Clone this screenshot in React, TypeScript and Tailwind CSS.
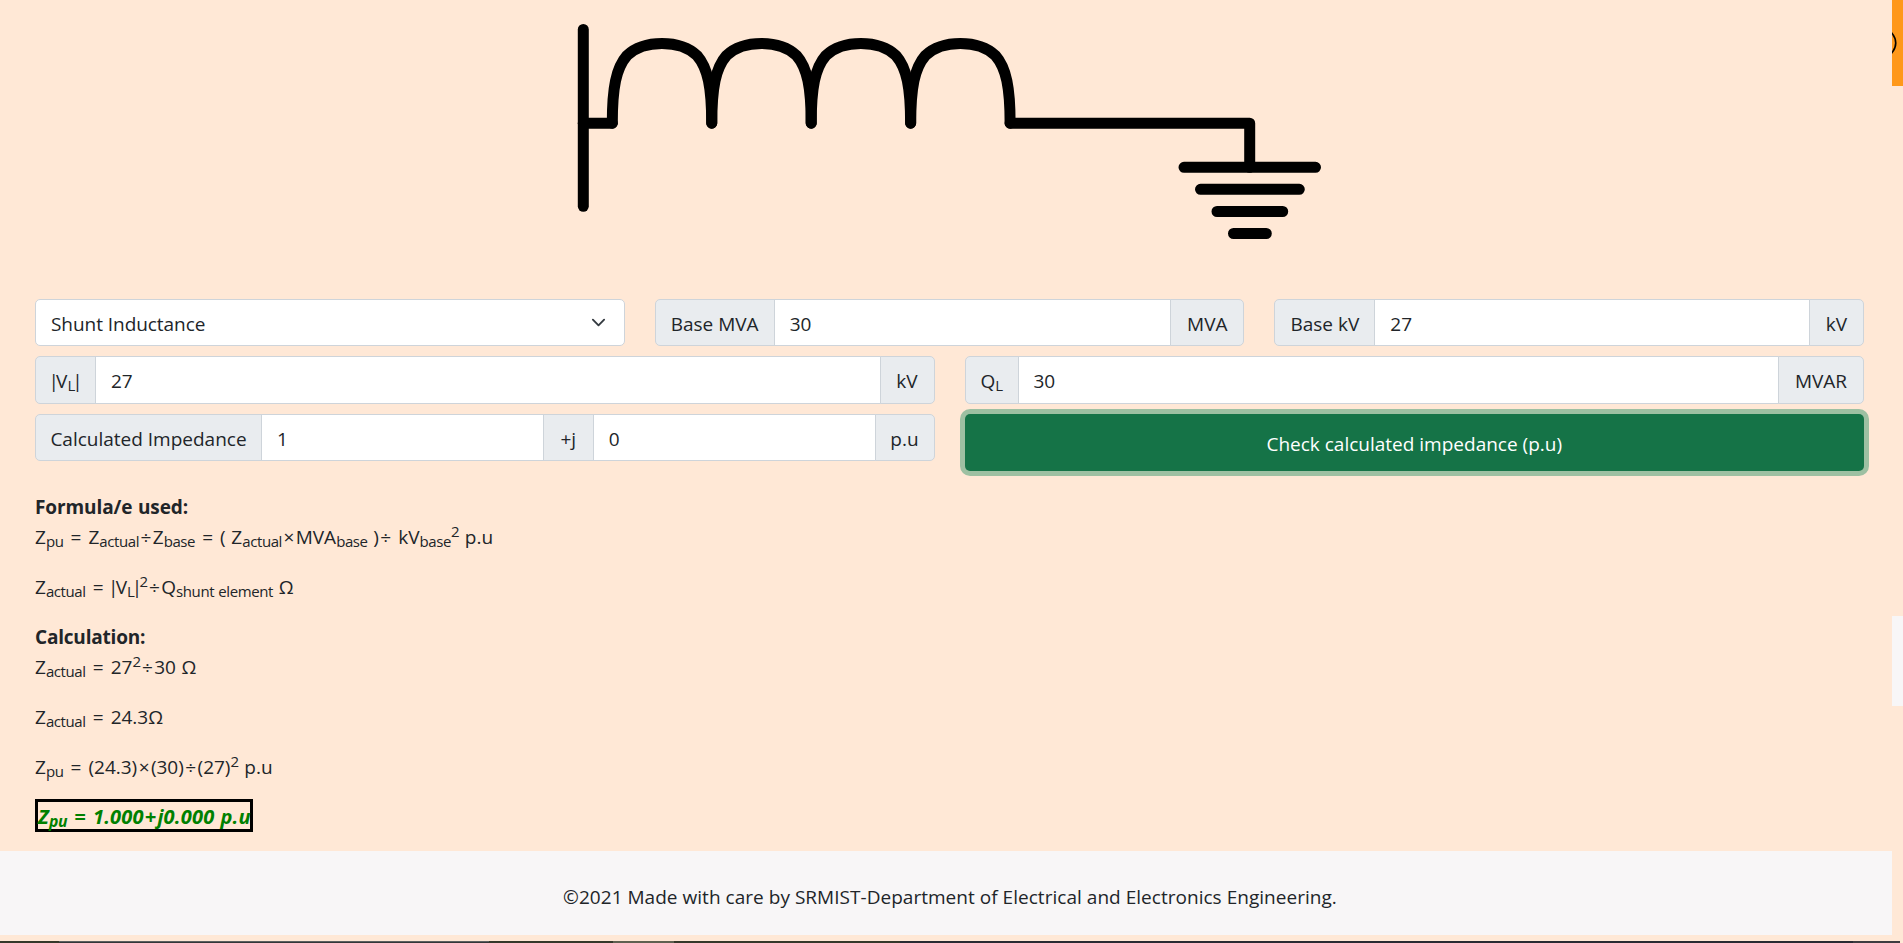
import React from "react";

const field = "flex items-center border border-[#ced4da] bg-white px-[15px] pt-[2px]";
const label = "flex items-center justify-center whitespace-nowrap border border-[#ced4da] bg-[#e9ecef] pt-[2px]";

function Sub({ children }: { children: React.ReactNode }) {
  return <sub className="bottom-[-0.18em] text-[0.79em] tracking-[-0.4px]">{children}</sub>;
}

function Sup() {
  return <sup className="text-[0.79em] tracking-[-0.4px]">2</sup>;
}

function Op({ children }: { children: React.ReactNode }) {
  return <span className="inline-block w-[13.7px] text-center">{children}</span>;
}

function Bar() {
  return <span className="inline-flex w-[5px] justify-center">|</span>;
}

function Circuit() {
  return (
    <svg className="block h-[240px] w-full" viewBox="0 0 1893 240" fill="none" stroke="#000" strokeWidth="11" strokeLinecap="round" strokeLinejoin="round">
      <path d="M583.3 29.5V206.3" />
      <path d="M583.3 123.2H612.3" />
      {[612.3, 711.8, 811.2, 910.7].map((x) => (
        <path key={x} transform={`translate(${x} 0)`} d="M0 123.2C0 88 3.7 68 14.7 55.5C23.7 47 37.7 43.5 49.7 43.5S75.7 47 84.7 55.5C95.7 68 99.4 88 99.4 123.2" />
      ))}
      <path d="M1010.1 123.2H1249.7V167.3" />
      <path d="M1184 167.3H1315.5M1200.5 189.3H1299.3M1217 211.5H1282.7M1233.5 233.5H1266.3" />
    </svg>
  );
}

export default function App() {
  return (
    <div className="relative h-[943px] w-[1903px] overflow-hidden bg-[#ffe8d6] font-['Open_Sans',sans-serif] text-[19px] leading-[30px] text-[#212529]">
      <main className="flex h-[851px] w-[1892px] flex-col">
        <div className="w-[1893px]">
          <Circuit />
        </div>
        <form className="ml-[35px] mt-[59px] flex w-[1829px] flex-col gap-[10px]">
          <div className="grid h-[47px] grid-cols-3 gap-[30px]">
            <div className="flex items-center justify-between rounded-[5px] border border-[#ced4da] bg-white pl-[15px] pr-[18px]">
              <span className="pt-[2px] tracking-[-0.05px]">Shunt Inductance</span>
              <svg className="h-[15px] w-[15px]" viewBox="0 0 16 16" fill="none" stroke="#343a40" strokeWidth="2" strokeLinecap="round" strokeLinejoin="round">
                <path d="M2 5l6 6 6-6" />
              </svg>
            </div>
            <div className="flex">
              <span className={`${label} w-[120px] rounded-l-[5px]`}>Base MVA</span>
              <span className={`${field} -mx-px flex-1`}>30</span>
              <span className={`${label} w-[74px] rounded-r-[5px]`}>MVA</span>
            </div>
            <div className="flex">
              <span className={`${label} w-[101px] rounded-l-[5px]`}>Base kV</span>
              <span className={`${field} -mx-px flex-1`}>27</span>
              <span className={`${label} w-[55px] rounded-r-[5px]`}>kV</span>
            </div>
          </div>
          <div className="grid h-[48px] grid-cols-2 gap-[30px]">
            <div className="flex">
              <span className={`${label} w-[61px] rounded-l-[5px]`}><span><Bar />V<Sub>L</Sub><Bar /></span></span>
              <span className={`${field} -mx-px flex-1`}>27</span>
              <span className={`${label} w-[55px] rounded-r-[5px]`}>kV</span>
            </div>
            <div className="flex">
              <span className={`${label} w-[54px] rounded-l-[5px]`}><span>Q<Sub>L</Sub></span></span>
              <span className={`${field} -mx-px flex-1`}>30</span>
              <span className={`${label} w-[86px] rounded-r-[5px]`}>MVAR</span>
            </div>
          </div>
          <div className="grid grid-cols-2 items-start gap-[30px]">
            <div className="flex h-[47px]">
              <span className={`${label} w-[227px] rounded-l-[5px]`}>Calculated Impedance</span>
              <span className={`${field} -mx-px flex-1`}>1</span>
              <span className={`${label} w-[51px]`}>+j</span>
              <span className={`${field} -mx-px flex-1`}>0</span>
              <span className={`${label} w-[60px] rounded-r-[5px]`}>p.u</span>
            </div>
            <button type="button" className="flex h-[57px] items-center justify-center rounded-[5px] bg-[#157347] pt-[3px] text-white shadow-[0_0_0_5px_#9dc0a2]">
              Check calculated impedance (p.u)
            </button>
          </div>
        </form>
        <section className="ml-[35px] mt-[21px] flex flex-col items-start [word-spacing:0.7px]">
          <b className="tracking-[-0.1px]">Formula/e used:</b>
          <p className="mb-5">Z<Sub>pu</Sub> <Op>=</Op> Z<Sub>actual</Sub><Op>÷</Op>Z<Sub>base</Sub> <Op>=</Op> ( Z<Sub>actual</Sub><Op>×</Op>MVA<Sub>base</Sub> )<Op>÷</Op> kV<Sub>base</Sub><Sup /> p.u</p>
          <p className="mb-5">Z<Sub>actual</Sub> <Op>=</Op> <Bar />V<Sub>L</Sub><Bar /><Sup /><Op>÷</Op>Q<Sub>shunt element</Sub> Ω</p>
          <b className="tracking-[-0.2px]">Calculation:</b>
          <p className="mb-5">Z<Sub>actual</Sub> <Op>=</Op> 27<Sup /><Op>÷</Op>30 Ω</p>
          <p className="mb-5">Z<Sub>actual</Sub> <Op>=</Op> 24.3Ω</p>
          <p className="mb-[17px]">Z<Sub>pu</Sub> <Op>=</Op> (24.3)<Op>×</Op>(30)<Op>÷</Op>(27)<Sup /> p.u</p>
          <p className="h-[33px] w-[218px] whitespace-nowrap border-[3px] border-black text-[20px] font-bold italic tracking-[0.2px] text-[#008000]">Z<Sub>pu</Sub> <Op>=</Op> 1.000<Op>+</Op>j0.000 p.u</p>
        </section>
      </main>
      <footer className="flex h-[84px] w-[1892px] items-center justify-center bg-[#f8f6f7] pl-[8px] pt-[7px] tracking-[0.03px]">
        ©2021 Made with care by SRMIST-Department of Electrical and Electronics Engineering.
      </footer>
      <div className="mt-[6px] flex h-[2px] bg-[#292a32]">
        <span className="w-[59px] bg-[#35382a]" />
        <span className="w-[430px] border-t border-[#5c5f60] bg-[#343738]" />
        <span className="w-[124px] bg-[#35382a]" />
        <span className="w-[61px] bg-[#5f6050]" />
        <span className="w-[226px] bg-[#35382a]" />
        <span className="flex-1" />
        <span className="w-[47px] bg-[#3d3c40]" />
        <span className="w-[3px] bg-[#ffe8d6]" />
      </div>
      <div className="absolute right-0 top-0 h-[86px] w-[11px] overflow-hidden bg-[#ff981a]">
        <svg className="h-full w-full" viewBox="0 0 11 86" fill="none" stroke="#000" strokeWidth="1.6">
          <path d="M-1 32Q8.5 43-1 54" />
        </svg>
      </div>
      <div className="absolute right-0 top-[616px] h-[90px] w-[11px] bg-[#f8f6f7]" />
    </div>
  );
}
